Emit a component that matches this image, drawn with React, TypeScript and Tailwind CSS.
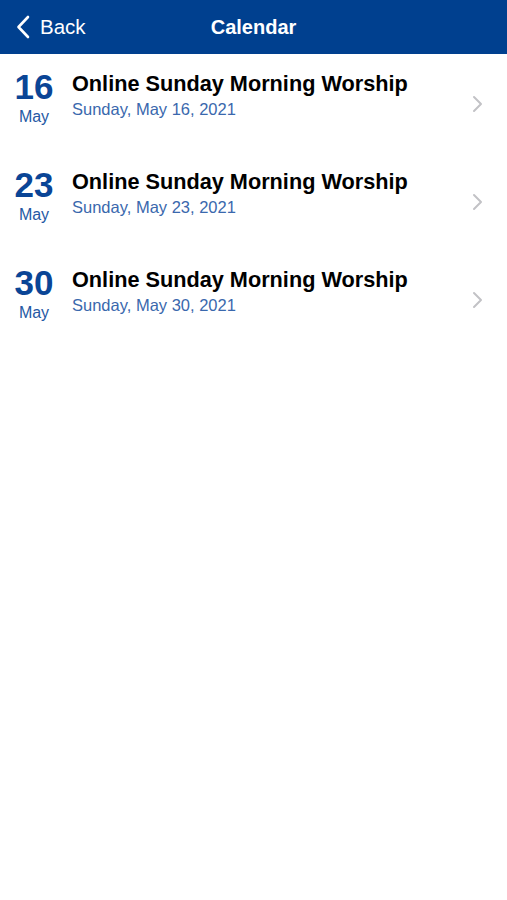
type EventItem = { day: string; month: string; title: string; date: string }

const events: EventItem[] = [
  { day: "16", month: "May", title: "Online Sunday Morning Worship", date: "Sunday, May 16, 2021" },
  { day: "23", month: "May", title: "Online Sunday Morning Worship", date: "Sunday, May 23, 2021" },
  { day: "30", month: "May", title: "Online Sunday Morning Worship", date: "Sunday, May 30, 2021" },
]

const App = () => {
  return (
    <div className="min-h-[900px] bg-white" style={{ fontFamily: '"Liberation Sans", Arial, sans-serif' }}>
      <div className="relative flex h-[54px] items-center bg-[#00408f] text-white">
        <div className="flex items-center pl-[16px]">
          <svg width="14" height="24" viewBox="0 0 14 24" fill="none">
            <polyline points="12,2 2.5,12 12,22" stroke="white" strokeWidth="2.6" strokeLinecap="round" strokeLinejoin="round" />
          </svg>
          <span className="ml-[10px] text-[20.5px]">Back</span>
        </div>
        <div className="pointer-events-none absolute left-0 right-0 text-center text-[20px] font-bold">Calendar</div>
      </div>

      <div className="pt-[13px]">
        {events.map((e) => (
          <div key={e.day} className="flex h-[98px] items-start">
            <div className="flex w-[68px] flex-col items-center text-[#0a4596]">
              <div className="text-[35px] font-bold leading-[40px]">{e.day}</div>
              <div className="mt-[1px] text-[16px] leading-[18px] text-[#2559a4]">{e.month}</div>
            </div>
            <div className="flex-1 pl-[4px] pt-[4px]">
              <div className="text-[21.7px] font-bold leading-[26px] text-black">{e.title}</div>
              <div className="mt-[1px] text-[16.5px] leading-[22px] text-[#3a68ad]">{e.date}</div>
            </div>
            <div className="pr-[24px] pt-[28px]">
              <svg width="11" height="18" viewBox="0 0 11 18" fill="none">
                <polyline points="2,2 9,9 2,16" stroke="#c2c2c6" strokeWidth="2" strokeLinecap="round" strokeLinejoin="round" />
              </svg>
            </div>
          </div>
        ))}
      </div>
    </div>
  )
}

export default App
